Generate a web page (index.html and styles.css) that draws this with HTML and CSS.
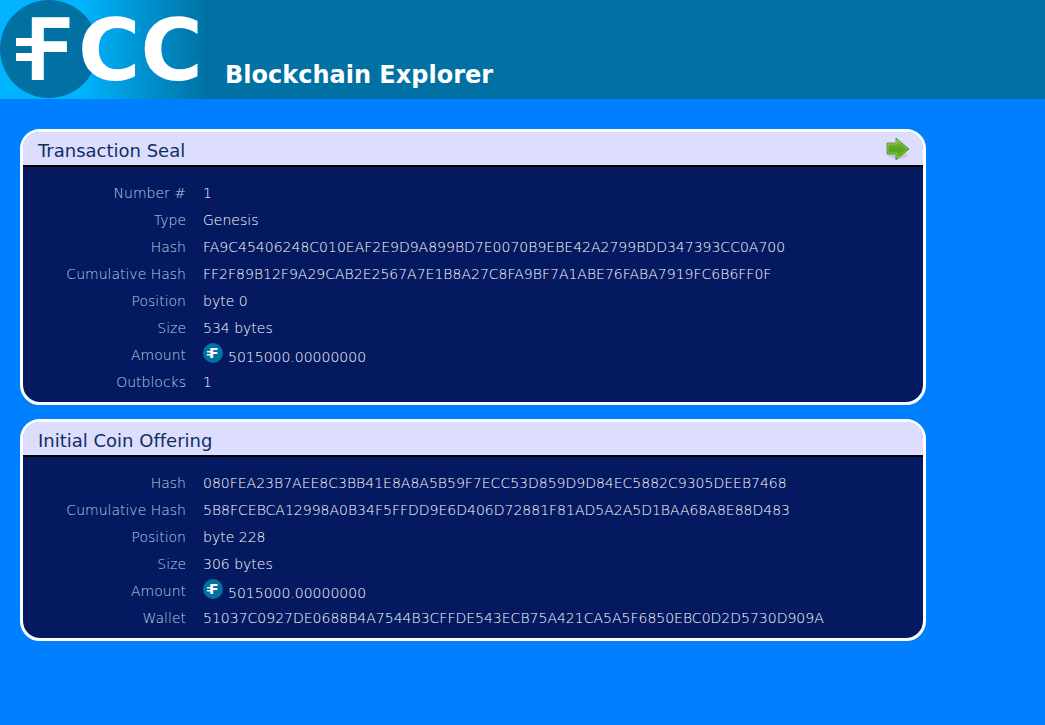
FILE: index.html
```html
<!DOCTYPE html>
<html lang="en">
  <head>
    <meta charset="UTF-8" />
    <meta name="viewport" content="width=device-width, initial-scale=1.0" />
    <title>FCC Blockchain Explorer</title>
    <link rel="stylesheet" href="styles.css">
  </head>
  <body>
    <svg class="defs" width="0" height="0" aria-hidden="true">
      <symbol id="coin" viewBox="0 0 20 20">
        <circle cx="10" cy="10" r="10" fill="#0071a2" />
        <text class="coin-letter" x="6" y="15">F</text>
        <path d="M4 8h4v1.500H4zM4 11h4v1.500H4z" fill="#fff" />
      </symbol>
    </svg>

    <div class="header">
      <svg class="logo" width="208" height="99" viewBox="0 0 208 99" role="img" aria-label="FCC">
        <defs>
          <linearGradient id="fade">
            <stop offset="0.38" stop-color="#00b4ff" />
            <stop offset="1" stop-color="#0071a2" />
          </linearGradient>
        </defs>
        <rect width="208" height="99" fill="url(#fade)" />
        <circle cx="49" cy="49" r="49" fill="#0071a2" />
        <text class="logo-coin" x="26" y="78">F</text>
        <path d="M16 38h18v8H16zM16 53h18v8H16z" fill="#fff" />
        <text class="logo-text" x="78" y="80">CC</text>
      </svg>
      <h1>Blockchain Explorer</h1>
    </div>

    <div class="content">
      <div class="block">
        <div class="block-title">
          <h2>Transaction Seal</h2>
          <a class="next" href="#" title="Next">
            <svg width="24" height="24" viewBox="0 0 24 24">
              <defs>
                <linearGradient id="green" x1="0" y1="0" x2="0" y2="1">
                  <stop offset="0" stop-color="#86c25a" />
                  <stop offset="0.5" stop-color="#55a51c" />
                  <stop offset="1" stop-color="#5cb814" />
                </linearGradient>
              </defs>
              <ellipse cx="12" cy="18" rx="10" ry="4" fill="#000" opacity="0.1" />
              <path d="M1 6h9V1l13 11-13 11v-6H1z" fill="url(#green)" stroke="#5a9a35" />
              <path d="M2 7h9V3l10 9-10 9v-5H2z" fill="none" stroke="#a5dc6a" opacity="0.5" />
            </svg>
          </a>
        </div>
        <table>
          <tr><th scope="row">Number #</th><td>1</td></tr>
          <tr><th scope="row">Type</th><td>Genesis</td></tr>
          <tr><th scope="row">Hash</th><td>FA9C45406248C010EAF2E9D9A899BD7E0070B9EBE42A2799BDD347393CC0A700</td></tr>
          <tr><th scope="row">Cumulative Hash</th><td>FF2F89B12F9A29CAB2E2567A7E1B8A27C8FA9BF7A1ABE76FABA7919FC6B6FF0F</td></tr>
          <tr><th scope="row">Position</th><td>byte 0</td></tr>
          <tr><th scope="row">Size</th><td>534 bytes</td></tr>
          <tr>
            <th scope="row">Amount</th>
            <td><span class="amount"><svg width="20" height="20"><use href="#coin" /></svg><span>5015000.00000000</span></span></td>
          </tr>
          <tr><th scope="row">Outblocks</th><td>1</td></tr>
        </table>
      </div>

      <div class="block">
        <div class="block-title">
          <h2>Initial Coin Offering</h2>
        </div>
        <table>
          <tr><th scope="row">Hash</th><td>080FEA23B7AEE8C3BB41E8A8A5B59F7ECC53D859D9D84EC5882C9305DEEB7468</td></tr>
          <tr><th scope="row">Cumulative Hash</th><td>5B8FCEBCA12998A0B34F5FFDD9E6D406D72881F81AD5A2A5D1BAA68A8E88D483</td></tr>
          <tr><th scope="row">Position</th><td>byte 228</td></tr>
          <tr><th scope="row">Size</th><td>306 bytes</td></tr>
          <tr>
            <th scope="row">Amount</th>
            <td><span class="amount"><svg width="20" height="20"><use href="#coin" /></svg><span>5015000.00000000</span></span></td>
          </tr>
          <tr><th scope="row">Wallet</th><td>51037C0927DE0688B4A7544B3CFFDE543ECB75A421CA5A5F6850EBC0D2D5730D909A</td></tr>
        </table>
      </div>
    </div>
  </body>
</html>
```
FILE: styles.css
```css
body {
  margin: 0;
  background-color: #0080ff;
  color: #fff;
  font-family: "DejaVu Sans", Verdana, sans-serif;
  font-size: 14px;
  font-variant-ligatures: none;
}

.defs {
  display: block;
}

.header {
  display: flex;
  align-items: flex-end;
  gap: 17px;
  background-color: #0071a2;
}

.logo {
  display: block;
  flex-shrink: 0;
}

.logo-text {
  fill: #fff;
  font-size: 85px;
  font-weight: bold;
}

.logo-coin {
  fill: #fff;
  stroke: #fff;
  stroke-width: 4px;
  font-size: 80px;
}

.coin-letter {
  fill: #fff;
  font-size: 14px;
  font-weight: bold;
}

h1 {
  margin: 0;
  padding-bottom: 9px;
  font-size: 24px;
  line-height: 30px;
}

.content {
  max-width: 906px;
  padding: 30px 20px;
}

.block {
  margin-bottom: 14px;
  border: 3px solid #fff;
  border-radius: 20px;
  background: linear-gradient(#ddddff 33px, #051960 33px);
  background-clip: padding-box;
}

.block-title {
  display: flex;
  justify-content: space-between;
  align-items: center;
  height: 33px;
  padding: 0 13px 0 15px;
  border-bottom: 2px solid #000;
}

h2 {
  margin: 0;
  padding-top: 4px;
  color: #103060;
  font-size: 18px;
  font-weight: normal;
  line-height: 22px;
}

.next svg {
  display: block;
}

table {
  margin: 12px 0 7px;
  border-collapse: collapse;
}

th,
td {
  height: 27px;
  padding: 0;
  font-weight: 200;
  line-height: 20px;
}

th {
  width: 163px;
  color: #add8e6;
  text-align: right;
}

td {
  padding-left: 17px;
  overflow-wrap: anywhere;
}

.amount {
  display: flex;
  align-items: flex-start;
  gap: 5px;
}

.amount span {
  padding-top: 4px;
}
```
